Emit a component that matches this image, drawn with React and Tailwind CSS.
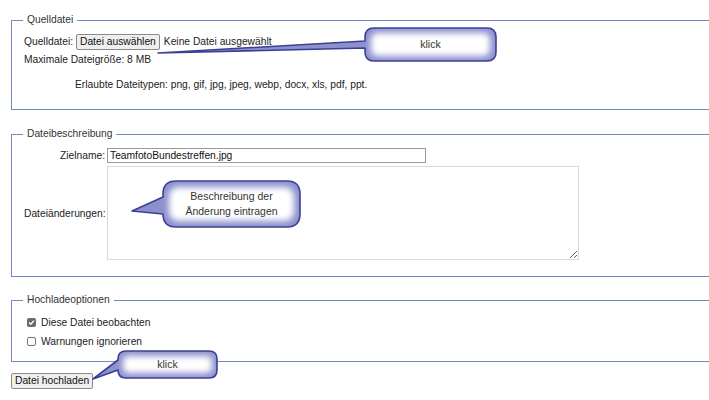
import React from 'react';

// speech bubble: lavender edge, white glow inside, navy outline
const Bubble = ({ id, d, inner }) => (
  <g>
    <defs>
      <clipPath id={`clip-${id}`}>
        <path d={d} />
      </clipPath>
      <filter id={`glow-${id}`} x="-50%" y="-50%" width="200%" height="200%">
        <feGaussianBlur stdDeviation="3.2" />
      </filter>
    </defs>
    <path d={d} fill="#8c90cd" />
    <g clipPath={`url(#clip-${id})`}>
      <rect {...inner} fill="#ffffff" filter={`url(#glow-${id})`} />
    </g>
    <path d={d} fill="none" stroke="#3c4095" strokeWidth="1.6" strokeLinejoin="round" />
  </g>
);

const bubbles = [
  {
    id: 'a',
    d: 'M374 28 H487 Q496 28 496 37 V52 Q496 61 487 61 H374 Q365 61 365 52 V48 L158 53 L365 41 V37 Q365 28 374 28 Z',
    inner: { x: 371, y: 33, width: 119, height: 23, rx: 6 },
  },
  {
    id: 'b',
    d: 'M176 181 H287 Q300 181 300 194 V214 Q300 227 287 227 H176 Q163 227 163 214 L132 211 L163 197 V194 Q163 181 176 181 Z',
    inner: { x: 169, y: 187, width: 125, height: 34, rx: 9 },
  },
  {
    id: 'c',
    d: 'M126 351 H209 Q217 351 217 359 V370 Q217 378 209 378 H126 Q118 378 118 370 L93 379 L118 360 V359 Q118 351 126 351 Z',
    inner: { x: 123, y: 356, width: 89, height: 17, rx: 5 },
  },
];

const Box = ({ legend, className = '', children }) => (
  <fieldset className={`ml-[11px] w-[720px] border border-[#7589c4] pl-[12px] ${className}`}>
    <legend className="ml-[-1px] px-[4px] leading-[12px] text-[#333]">{legend}</legend>
    {children}
  </fieldset>
);

const Check = ({ checked, label, className = '' }) => (
  <div className={`flex h-[14px] items-center ${className}`}>
    {checked ? (
      <span className="ml-[3px] flex h-[9px] w-[9px] items-center justify-center rounded-[2px] bg-[#6a6a6a]">
        <svg width="7" height="7" viewBox="0 0 7 7">
          <path d="M1 3.6 L2.8 5.3 L6 1.6" fill="none" stroke="#fff" strokeWidth="1.4" />
        </svg>
      </span>
    ) : (
      <span className="ml-[3px] h-[9px] w-[9px] rounded-[2px] border border-[#767676] bg-white" />
    )}
    <span className="ml-[5px]">{label}</span>
  </div>
);

const btn =
  'h-[16px] whitespace-nowrap rounded-[2px] border border-[#8a8a8a] bg-[#efefef] px-[3px] leading-none text-[#111]';

export default function App() {
  return (
    <div className="relative h-[400px] w-[709px] overflow-hidden bg-white pt-[14px] font-['Liberation_Sans',Arial,sans-serif] text-[10.25px] text-[#222]">
      <Box legend="Quelldatei" className="pb-[17px]">
        <div className="mt-[8px] flex h-[16px] items-center">
          <span>Quelldatei:</span>
          <button className={`ml-[3px] ${btn}`}>Datei auswählen</button>
          <span className="ml-[4px]">Keine Datei ausgewählt</span>
        </div>
        <div className="mt-[3px] leading-[14px]">Maximale Dateigröße: 8 MB</div>
        <div className="ml-[51px] mt-[11px] leading-[14px]">
          Erlaubte Dateitypen: png, gif, jpg, jpeg, webp, docx, xls, pdf, ppt.
        </div>
      </Box>

      <Box legend="Dateibeschreibung" className="mt-[18px] pb-[16px]">
        <div className="mt-[8px] flex items-center">
          <label className="w-[81px] text-right">Zielname:</label>
          <input
            readOnly
            defaultValue="TeamfotoBundestreffen.jpg"
            className="ml-[2px] h-[15px] w-[319px] border border-[#9a9a9a] px-[2px] text-[10.25px] leading-none text-[#111] outline-none"
          />
        </div>
        <div className="mt-[3px] flex items-center">
          <label className="w-[81px] text-right">Dateiänderungen:</label>
          <textarea
            readOnly
            className="ml-[2px] h-[94px] w-[472px] resize border border-[#d6d9de] outline-none"
          />
        </div>
      </Box>

      <Box legend="Hochladeoptionen" className="mt-[17px] pb-[13px]">
        <Check checked label="Diese Datei beobachten" className="mt-[9px]" />
        <Check label="Warnungen ignorieren" className="mt-[5px]" />
      </Box>

      <button className={`ml-[11px] mt-[11px] ${btn}`}>Datei hochladen</button>

      <svg className="pointer-events-none absolute left-0 top-0" width="709" height="400">
        {bubbles.map((b) => (
          <Bubble key={b.id} {...b} />
        ))}
      </svg>
      <div className="absolute left-[365px] top-[37px] w-[131px] text-center text-[10.5px] leading-[14px] text-[#333]">klick</div>
      <div className="absolute left-[163px] top-[189px] w-[137px] text-center text-[10.5px] leading-[15px] text-[#333]">
        Beschreibung der
        <br />
        Änderung eintragen
      </div>
      <div className="absolute left-[118px] top-[357px] w-[99px] text-center text-[10.5px] leading-[14px] text-[#333]">klick</div>
    </div>
  );
}
